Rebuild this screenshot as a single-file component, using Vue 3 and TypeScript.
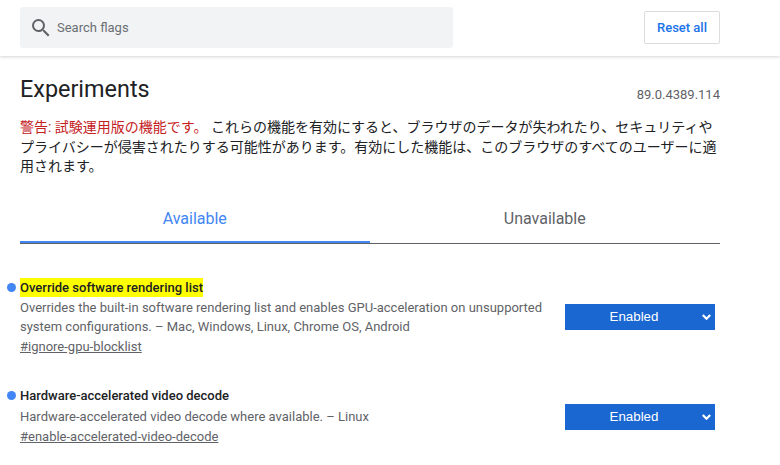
<script setup lang="ts">
interface Flag {
  name: string
  highlight: boolean
  desc: string[]
  link: string
}
const flags: Flag[] = [
  {
    name: 'Override software rendering list',
    highlight: true,
    desc: ['Overrides the built-in software rendering list and enables GPU-acceleration on unsupported', 'system configurations. – Mac, Windows, Linux, Chrome OS, Android'],
    link: '#ignore-gpu-blocklist'
  },
  {
    name: 'Hardware-accelerated video decode',
    highlight: false,
    desc: ['Hardware-accelerated video decode where available. – Linux'],
    link: '#enable-accelerated-video-decode'
  }
]
</script>

<template>
  <div class="page">
    <header class="top">
      <div class="search">
        <svg class="icon" width="24" height="24" viewBox="0 0 24 24"><path fill="#5f6368" d="M15.5 14h-.79l-.28-.27A6.47 6.47 0 0 0 16 9.5 6.5 6.5 0 1 0 9.5 16c1.61 0 3.09-.59 4.23-1.57l.27.28v.79l5 4.99L20.49 19l-4.99-5zm-6 0C7.01 14 5 11.99 5 9.5S7.01 5 9.5 5 14 7.01 14 9.5 11.99 14 9.5 14z"/></svg>
        <span class="placeholder">Search flags</span>
      </div>
      <button class="reset">Reset all</button>
    </header>
    <main class="body">
      <div class="title-row">
        <h1>Experiments</h1>
        <span class="version">89.0.4389.114</span>
      </div>
      <p class="warning"><span class="red">警告: 試験運用版の機能です。</span> これらの機能を有効にすると、ブラウザのデータが失われたり、セキュリティやプライバシーが侵害されたりする可能性があります。有効にした機能は、このブラウザのすべてのユーザーに適用されます。</p>
      <div class="tabs">
        <div class="tab active">Available</div>
        <div class="tab">Unavailable</div>
      </div>
      <section v-for="f in flags" :key="f.link" class="flag">
        <div class="info">
          <h2 class="name"><span class="dot"></span><span :class="{ mark: f.highlight }">{{ f.name }}</span></h2>
          <p class="desc"><template v-for="(l, i) in f.desc" :key="i">{{ l }}<br v-if="i < f.desc.length - 1" /></template></p>
          <a class="link">{{ f.link }}</a>
        </div>
        <div class="select">
          <span>Enabled</span>
          <svg class="chev" width="9" height="6" viewBox="0 0 9 6"><path d="M.8 1 4.5 4.7 8.2 1" fill="none" stroke="#fff" stroke-width="2.2"/></svg>
        </div>
      </section>
    </main>
  </div>
</template>

<style scoped>
.page {
  width: 780px;
  height: 465px;
  overflow: hidden;
  background: #fff;
  font-family: Roboto, "Noto Sans CJK JP", sans-serif;
}
.top {
  height: 56px;
  box-sizing: border-box;
  padding: 7px 60px 8px 20px;
  display: flex;
  justify-content: space-between;
  align-items: center;
  box-shadow: 0 1px 3px rgba(60, 64, 67, 0.22);
}
.search {
  width: 433px;
  height: 41px;
  border-radius: 3px;
  background: #f1f3f4;
  display: flex;
  align-items: center;
  padding-left: 9px;
  box-sizing: border-box;
  gap: 4px;
}
.icon { flex: none; }
.placeholder {
  font-size: 13px;
  color: #6b6f74;
}
.reset {
  width: 76px;
  height: 33px;
  background: #fff;
  border: 1px solid #dadce0;
  border-radius: 2px;
  color: #1a73e8;
  font: 500 13px Roboto, sans-serif;
  padding: 0;
}
.body { padding: 0 60px 0 20px; }
.title-row {
  display: flex;
  justify-content: space-between;
  align-items: baseline;
  padding-top: 18px;
}
h1 {
  margin: 0;
  font-size: 23.4px;
  font-weight: 400;
  line-height: 30px;
  color: #202124;
}
.version {
  font-size: 13px;
  color: #5f6368;
  position: relative;
  top: 2px;
}
.warning {
  margin: 14px 0 0;
  font-size: 14px;
  line-height: 19.6px;
  color: #202124;
}
.red { color: #c5221f; }
.tabs {
  display: flex;
  margin-top: 20px;
  border-bottom: 1px solid #5f6368;
}
.tab {
  width: 349.5px;
  height: 46px;
  text-align: center;
  font-size: 16px;
  line-height: 44px;
  color: #5f6368;
}
.tab + .tab { flex: 1; }
.tab.active {
  color: #4285f4;
  border-bottom: 2px solid #4285f4;
  margin-bottom: -1px;
  box-sizing: border-box;
}
.flag {
  display: flex;
  justify-content: space-between;
  align-items: center;
  padding-right: 5px;
  margin-top: 34px;
  position: relative;
}
.flag + .flag { margin-top: 30px; }
.info { width: 540px; }
.name {
  margin: 0;
  font-size: 13px;
  font-weight: 500;
  line-height: 19px;
  color: #202124;
  position: relative;
}
.mark {
  display: inline-block;
  background: #ff0;
}
.dot {
  position: absolute;
  left: -13px;
  top: 5px;
  width: 9px;
  height: 9px;
  border-radius: 50%;
  background: #4285f4;
}
.desc {
  margin: 2.6px 0 0;
  font-size: 13px;
  line-height: 18.2px;
  color: #5f6368;
}
.link {
  display: block;
  margin-top: 2px;
  font-size: 13px;
  line-height: 18.2px;
  color: #5f6368;
  text-decoration: underline;
}
.select {
  width: 150px;
  height: 26px;
  background: #1a67d2;
  color: #fff;
  font: 13.33px/26px "Liberation Sans", sans-serif;
  text-align: center;
  position: relative;
  flex: none;
}
.flag + .flag .select { margin-top: 2px; }
.select span { position: relative; left: -6px; }
.chev {
  position: absolute;
  right: 4px;
  top: 10px;
}
</style>
